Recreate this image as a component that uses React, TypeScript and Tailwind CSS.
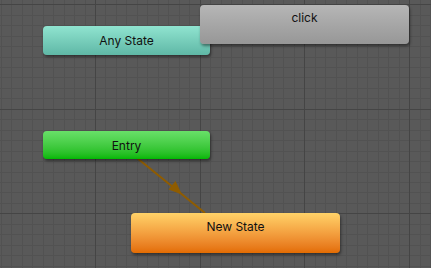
import React from "react";

const W = 431;
const H = 268;

// grid geometry read off the reference
const STEP_X = 10.47;
const STEP_Y = 10.45;
const ORIGIN_X = 95;
const ORIGIN_Y = 4.3;

function gridLines(origin: number, step: number, max: number) {
  const out: { pos: number; major: boolean }[] = [];
  for (let k = -20; k < 60; k++) {
    const p = Math.round(origin + k * step);
    if (p < 0 || p > max) continue;
    out.push({ pos: p + 0.5, major: ((k % 10) + 10) % 10 === 0 });
  }
  return out;
}

function Canvas() {
  const xs = gridLines(ORIGIN_X, STEP_X, W);
  const ys = gridLines(ORIGIN_Y, STEP_Y, H);
  return (
    <svg className="absolute inset-0" width={W} height={H} viewBox={`0 0 ${W} ${H}`}>
      {xs.filter((l) => !l.major).map((l) => (
        <line key={`vx${l.pos}`} x1={l.pos} y1={0} x2={l.pos} y2={H} stroke="#525252" strokeWidth={1} />
      ))}
      {ys.filter((l) => !l.major).map((l) => (
        <line key={`hy${l.pos}`} x1={0} y1={l.pos} x2={W} y2={l.pos} stroke="#525252" strokeWidth={1} />
      ))}
      {xs.filter((l) => l.major).map((l) => (
        <line key={`mx${l.pos}`} x1={l.pos} y1={0} x2={l.pos} y2={H} stroke="#454545" strokeWidth={1} />
      ))}
      {ys.filter((l) => l.major).map((l) => (
        <line key={`my${l.pos}`} x1={0} y1={l.pos} x2={W} y2={l.pos} stroke="#454545" strokeWidth={1} />
      ))}
      {/* transition Entry -> New State */}
      <line x1={137} y1={158} x2={205} y2={213} stroke="#8f5c00" strokeWidth={2} />
      <polygon points="182,194.5 168.5,189.5 175.5,181" fill="#8f5c00" />
    </svg>
  );
}

type NodeProps = {
  label: string;
  className: string;
  textClass?: string;
};

function StateNode({ label, className, textClass = "pt-[6px]" }: NodeProps) {
  return (
    <div
      className={`absolute rounded-[4px] shadow-[1px_2px_3px_rgba(0,0,0,0.45)] flex justify-center text-[12px] text-[#111] ${textClass} ${className}`}
    >
      {label}
    </div>
  );
}

export default function App() {
  return (
    <div
      className="relative w-[431px] h-[268px] overflow-hidden bg-[#595959]"
      style={{ fontFamily: "Inter, 'Noto Sans', sans-serif" }}
    >
      <Canvas />
      <StateNode
        label="Any State"
        className="left-[43px] top-[26px] w-[167px] h-[29px] bg-gradient-to-b from-[#90e4d0] to-[#5fb8a6]"
      />
      <StateNode
        label="click"
        className="left-[200px] top-[5px] w-[209px] h-[39px] bg-gradient-to-b from-[#b6b6b6] to-[#979797]"
        textClass="pt-[4px]"
      />
      <StateNode
        label="Entry"
        className="left-[43px] top-[131px] w-[167px] h-[28px] bg-gradient-to-b from-[#68e068] to-[#00b800]"
      />
      <StateNode
        label="New State"
        className="left-[131px] top-[213px] w-[209px] h-[40px] bg-gradient-to-b from-[#ffd268] to-[#e36c00]"
        textClass="pt-[5px]"
      />
    </div>
  );
}
